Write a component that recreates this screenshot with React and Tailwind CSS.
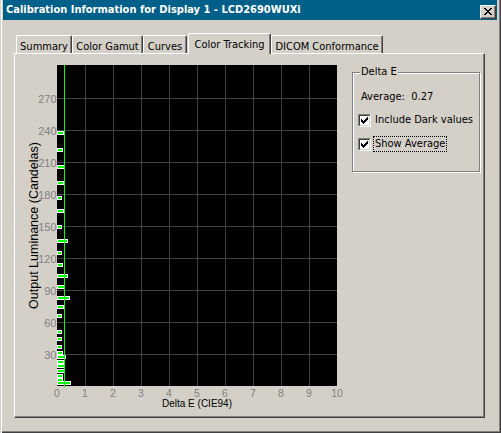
import React from "react";

const UI = "font-['DejaVu_Sans_Condensed','Liberation_Sans',Tahoma,sans-serif]";

// [top y, right x] of each bar, in page pixels as read off the reference
const BARS = [
  [131, 64], [148, 63], [165, 65], [181, 64], [196, 62], [209, 64], [225, 62],
  [239, 68], [251, 62], [263, 63], [274, 68], [285, 65], [296, 70], [305, 64],
  [314, 62], [323, 58], [330, 62], [337, 62], [345, 62], [351, 63], [355, 66],
  [360, 64], [364, 65], [369, 65], [374, 63], [378, 63], [381, 71],
];

const TABS = [
  { label: "Summary", w: "w-[56px]" },
  { label: "Color Gamut", w: "w-[71px]" },
  { label: "Curves", w: "w-[44px] mr-px" },
  { label: "Color Tracking", w: "w-[83px]", active: true },
  { label: "DICOM Conformance", w: "w-[112px]" },
];

function PixelGlyph({ rows }) {
  return (
    <svg width={rows[0].length} height={rows.length} shapeRendering="crispEdges">
      {rows.flatMap((r, y) =>
        r.split("").map((c, x) => (c === "X" ? <rect key={`${x}-${y}`} x={x} y={y} width="1" height="1" fill="#000" /> : null))
      )}
    </svg>
  );
}

const CLOSE = ["XX....XX", ".XX..XX.", "..XXXX..", "...XX...", "..XXXX..", ".XX..XX.", "XX....XX"];
const CHECK = ["......X", ".....XX", "X...XXX", "XX.XXX.", "XXXXX..", ".XXX...", "..X...."];

function CheckBox({ label, focused }) {
  return (
    <div className="flex items-center h-[16px]">
      <div className="w-[13px] h-[13px] border-t border-l border-t-[#808080] border-l-[#808080] border-b border-r border-b-white border-r-white shrink-0">
        <div className="w-[11px] h-[11px] border-t border-l border-t-[#404040] border-l-[#404040] border-b border-r border-b-[#d4d0c8] border-r-[#d4d0c8] bg-white flex items-center justify-center">
          <PixelGlyph rows={CHECK} />
        </div>
      </div>
      <span className={`ml-[3px] px-px leading-[14px] ${focused ? "outline outline-1 outline-dotted outline-black" : ""}`}>
        {label}
      </span>
    </div>
  );
}

function Chart() {
  const ks = [1, 2, 3, 4, 5, 6, 7, 8, 9];
  return (
    <svg width="330" height="360" className="shrink-0 font-['Liberation_Sans',Arial,sans-serif]">
      <rect x="42" y="11" width="280" height="321" fill="#000" />
      {ks.map((k) => (
        <line key={`v${k}`} x1={42 + 28 * k + 0.5} x2={42 + 28 * k + 0.5} y1="11" y2="332" stroke="#404040" />
      ))}
      {ks.map((k) => (
        <line key={`h${k}`} x1="42" x2="322" y1={332 - 32 * k + 0.5} y2={332 - 32 * k + 0.5} stroke="#404040" />
      ))}
      {BARS.map(([top, right], i) => (
        <rect
          key={i}
          x="42.5"
          y={top - 54 + 0.5}
          width={Math.max(right - 57 - 1, 0)}
          height="3"
          fill="#00ff00"
          stroke="#fff"
        />
      ))}
      <line x1="49.5" x2="49.5" y1="11" y2="333" stroke="#00ff00" />
      {ks.map((k) => (
        <text key={`yl${k}`} x="41.5" y={332 - 32 * k + 4.5} textAnchor="end" fontSize="11" fill="#808080">
          {30 * k}
        </text>
      ))}
      {[0, ...ks, 10].map((k) => (
        <text key={`xl${k}`} x={42 + 28 * k} y="343" textAnchor="middle" fontSize="10.5" fill="#808080">
          {k}
        </text>
      ))}
      <text x="182" y="353" textAnchor="middle" fontSize="10" fill="#000">
        Delta E (CIE94)
      </text>
      <text transform="translate(22.5 171.5) rotate(-90)" textAnchor="middle" fontSize="12.5" fill="#000">
        Output Luminance (Candelas)
      </text>
    </svg>
  );
}

export default function App() {
  return (
    <div
      className={`w-[501px] h-[433px] bg-[#d4d0c8] text-[11px] text-black overflow-hidden ${UI} shadow-[inset_1px_0_0_#d4d0c8,inset_2px_0_0_#fff,inset_-1px_-1px_0_#404040,inset_-2px_-2px_0_#808080]`}
    >
      <div className="ml-[3px] mr-[4px] h-[20px] bg-[#00608a] flex items-center justify-between pl-[3px] pr-[1px]">
        <span className="text-white font-bold text-[11px] pt-px">
          Calibration Information for Display 1 - LCD2690WUXi
        </span>
        <div className="w-[16px] h-[14px] mt-[3px] bg-[#d4d0c8] border-t border-l border-white border-b border-r border-b-[#404040] border-r-[#404040] shadow-[inset_-1px_-1px_0_#808080] flex items-center justify-center">
          <PixelGlyph rows={CLOSE} />
        </div>
      </div>

      <div className="ml-[14px] mt-[13px]">
        <div className="flex items-end h-[20px] ml-[2px] relative z-10">
          {TABS.map((t) => (
            <div
              key={t.label}
              className={`${t.w} ${t.active ? "h-[21px] -mb-[1px]" : "h-[18px]"} bg-[#d4d0c8] border-t border-l border-white border-r border-r-[#404040] shadow-[inset_-1px_0_0_#808080] rounded-t-[2px] flex justify-center pt-[3px]`}
            >
              {t.label}
            </div>
          ))}
        </div>

        <div className="w-[471px] h-[365px] border-t border-l border-white border-r border-b border-r-[#404040] border-b-[#404040] shadow-[inset_-1px_-1px_0_#808080] flex">
          <Chart />
          <div className="relative ml-[7px] mt-[18px] w-[128px] h-[100px] border border-[#808080] shadow-[inset_1px_1px_0_#fff,1px_1px_0_#fff] pl-[5px]">
            <span className="absolute left-[7px] -top-[8px] bg-[#d4d0c8] px-px leading-[14px]">Delta E</span>
            <div className="pl-[3px] mt-[17px] leading-[14px]">Average:&nbsp; 0.27</div>
            <div className="mt-[8px] flex flex-col gap-[8px]">
              <CheckBox label="Include Dark values" />
              <CheckBox label="Show Average" focused />
            </div>
          </div>
        </div>
      </div>
    </div>
  );
}
